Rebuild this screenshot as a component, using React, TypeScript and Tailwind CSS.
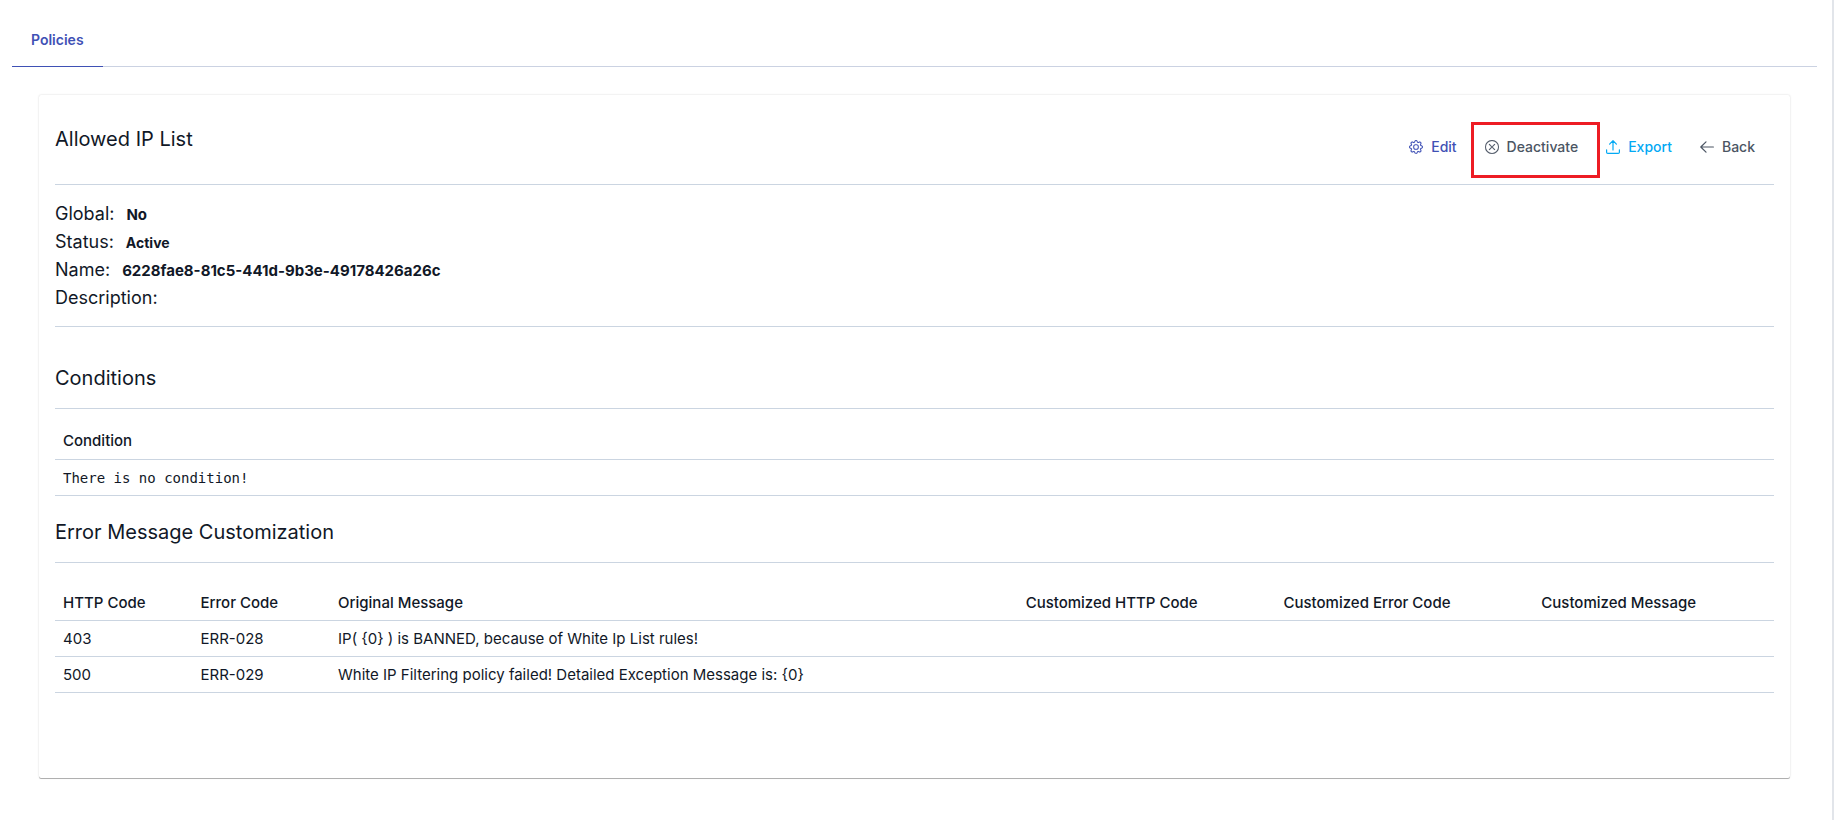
import type { ReactNode } from "react";
import { BsGear, BsXCircle } from "react-icons/bs";

const details = [
  { label: "Global:", value: "No", valueClass: "ml-3 text-[15px]" },
  { label: "Status:", value: "Active", valueClass: "ml-3 text-sm" },
  {
    label: "Name:",
    value: "6228fae8-81c5-441d-9b3e-49178426a26c",
    valueClass: "ml-3 text-[15px]",
  },
  { label: "Description:", value: "", valueClass: "" },
];

const errorColumns = [
  { title: "HTTP Code", width: "w-[8%]" },
  { title: "Error Code", width: "w-[8%]" },
  { title: "Original Message", width: "w-[40%]" },
  { title: "Customized HTTP Code", width: "w-[15%]" },
  { title: "Customized Error Code", width: "w-[15%]" },
  { title: "Customized Message", width: "w-[14%]" },
];

const errorRows = [
  ["403", "ERR-028", "IP( {0} ) is BANNED, because of White Ip List rules!", "", "", ""],
  [
    "500",
    "ERR-029",
    "White IP Filtering policy failed! Detailed Exception Message is: {0}",
    "",
    "",
    "",
  ],
];

const LineIcon = (props: { d: string }) => (
  <svg
    width="14"
    height="14"
    viewBox="0 0 14 14"
    fill="none"
    stroke="currentColor"
    strokeWidth="1.2"
    strokeLinecap="round"
    strokeLinejoin="round"
    aria-hidden="true"
  >
    <path d={props.d} />
  </svg>
);

const ActionButton = (props: {
  icon: ReactNode;
  color: string;
  children: ReactNode;
}) => (
  <button
    type="button"
    className={`flex items-center gap-2 px-3 py-2 text-sm font-medium ${props.color}`}
  >
    {props.icon}
    {props.children}
  </button>
);

const App = () => {
  return (
    <div className="min-h-screen border-r-2 border-[#e2e5ea] bg-white pl-3 pr-[15px] pb-10 font-['Inter',sans-serif] text-[#111827]">
      <nav className="flex border-b border-[#cbd2e2]">
        <button
          type="button"
          className="-mb-px h-[67px] border-b border-[#3f51b5] px-[19px] pt-[14px] text-sm font-semibold text-[#3f51b5]"
        >
          Policies
        </button>
      </nav>

      <main className="mx-[27px] mt-7 rounded-xs px-4 pb-[85px] shadow-[0_1px_0_rgba(0,0,0,0.28),0_0_2px_rgba(0,0,0,0.18)]">
        <header className="flex h-[90px] items-start justify-between border-b border-[#cbd5e1]">
          <h1 className="mt-[30px] text-xl leading-7">Allowed IP List</h1>
          <div className="mr-[7px] mt-[34px] flex items-center gap-1">
            <ActionButton
              icon={<BsGear size={14} strokeWidth={0.2} />}
              color="text-[#3f51b5]"
            >
              Edit
            </ActionButton>
            <div className="relative">
              <ActionButton
                icon={<BsXCircle size={14} strokeWidth={0.2} />}
                color="text-[#4b5563]"
              >
                Deactivate
              </ActionButton>
              <span className="pointer-events-none absolute -bottom-[13px] -left-[2px] -right-[10px] -top-[7px] border-3 border-[#ed1c24]"></span>
            </div>
            <ActionButton
              icon={<LineIcon d="M.6 9.8v2.4c0 .7.5 1.2 1.2 1.2h10.4c.7 0 1.2-.5 1.2-1.2V9.8M7 10V.8M3.6 4.1 7 .7l3.4 3.4" />}
              color="text-[#03a9f4]"
            >
              Export
            </ActionButton>
            <ActionButton
              icon={<LineIcon d="M13.4 7H.8M6 1.8.8 7 6 12.2" />}
              color="text-[#4b5563]"
            >
              Back
            </ActionButton>
          </div>
        </header>

        <dl className="border-b border-[#cbd5e1] pb-[14px] pt-[15px]">
          {details.map((item) => (
            <div key={item.label} className="flex h-7 items-baseline">
              <dt className="text-lg leading-7">{item.label}</dt>
              <dd className={`font-bold ${item.valueClass}`}>{item.value}</dd>
            </div>
          ))}
        </dl>

        <h2 className="border-b border-[#cbd5e1] pb-4 pt-[37px] text-xl leading-7">
          Conditions
        </h2>
        <table className="mt-[14px] w-full text-left text-[15px]">
          <thead>
            <tr className="h-9 border-b border-[#cbd5e1]">
              <th className="px-2 pt-px font-medium">Condition</th>
            </tr>
          </thead>
          <tbody>
            <tr className="h-9 border-b border-[#cbd5e1]">
              <td className="px-2 pt-px font-['DejaVu_Sans_Mono',monospace] text-sm">
                There is no condition!
              </td>
            </tr>
          </tbody>
        </table>

        <h2 className="border-b border-[#cbd5e1] pb-4 pt-[22px] text-xl leading-7">
          Error Message Customization
        </h2>
        <table className="mt-[22px] w-full table-fixed text-left text-[15px]">
          <thead>
            <tr className="h-9 border-b border-[#cbd5e1]">
              {errorColumns.map((col) => (
                <th key={col.title} className={`px-2 pt-px font-medium ${col.width}`}>
                  {col.title}
                </th>
              ))}
            </tr>
          </thead>
          <tbody>
            {errorRows.map((row) => (
              <tr key={row[1]} className="h-9 border-b border-[#cbd5e1]">
                {row.map((cell, i) => (
                  <td key={i} className="px-2 pt-px">
                    {cell}
                  </td>
                ))}
              </tr>
            ))}
          </tbody>
        </table>
      </main>
    </div>
  );
};

export default App;
